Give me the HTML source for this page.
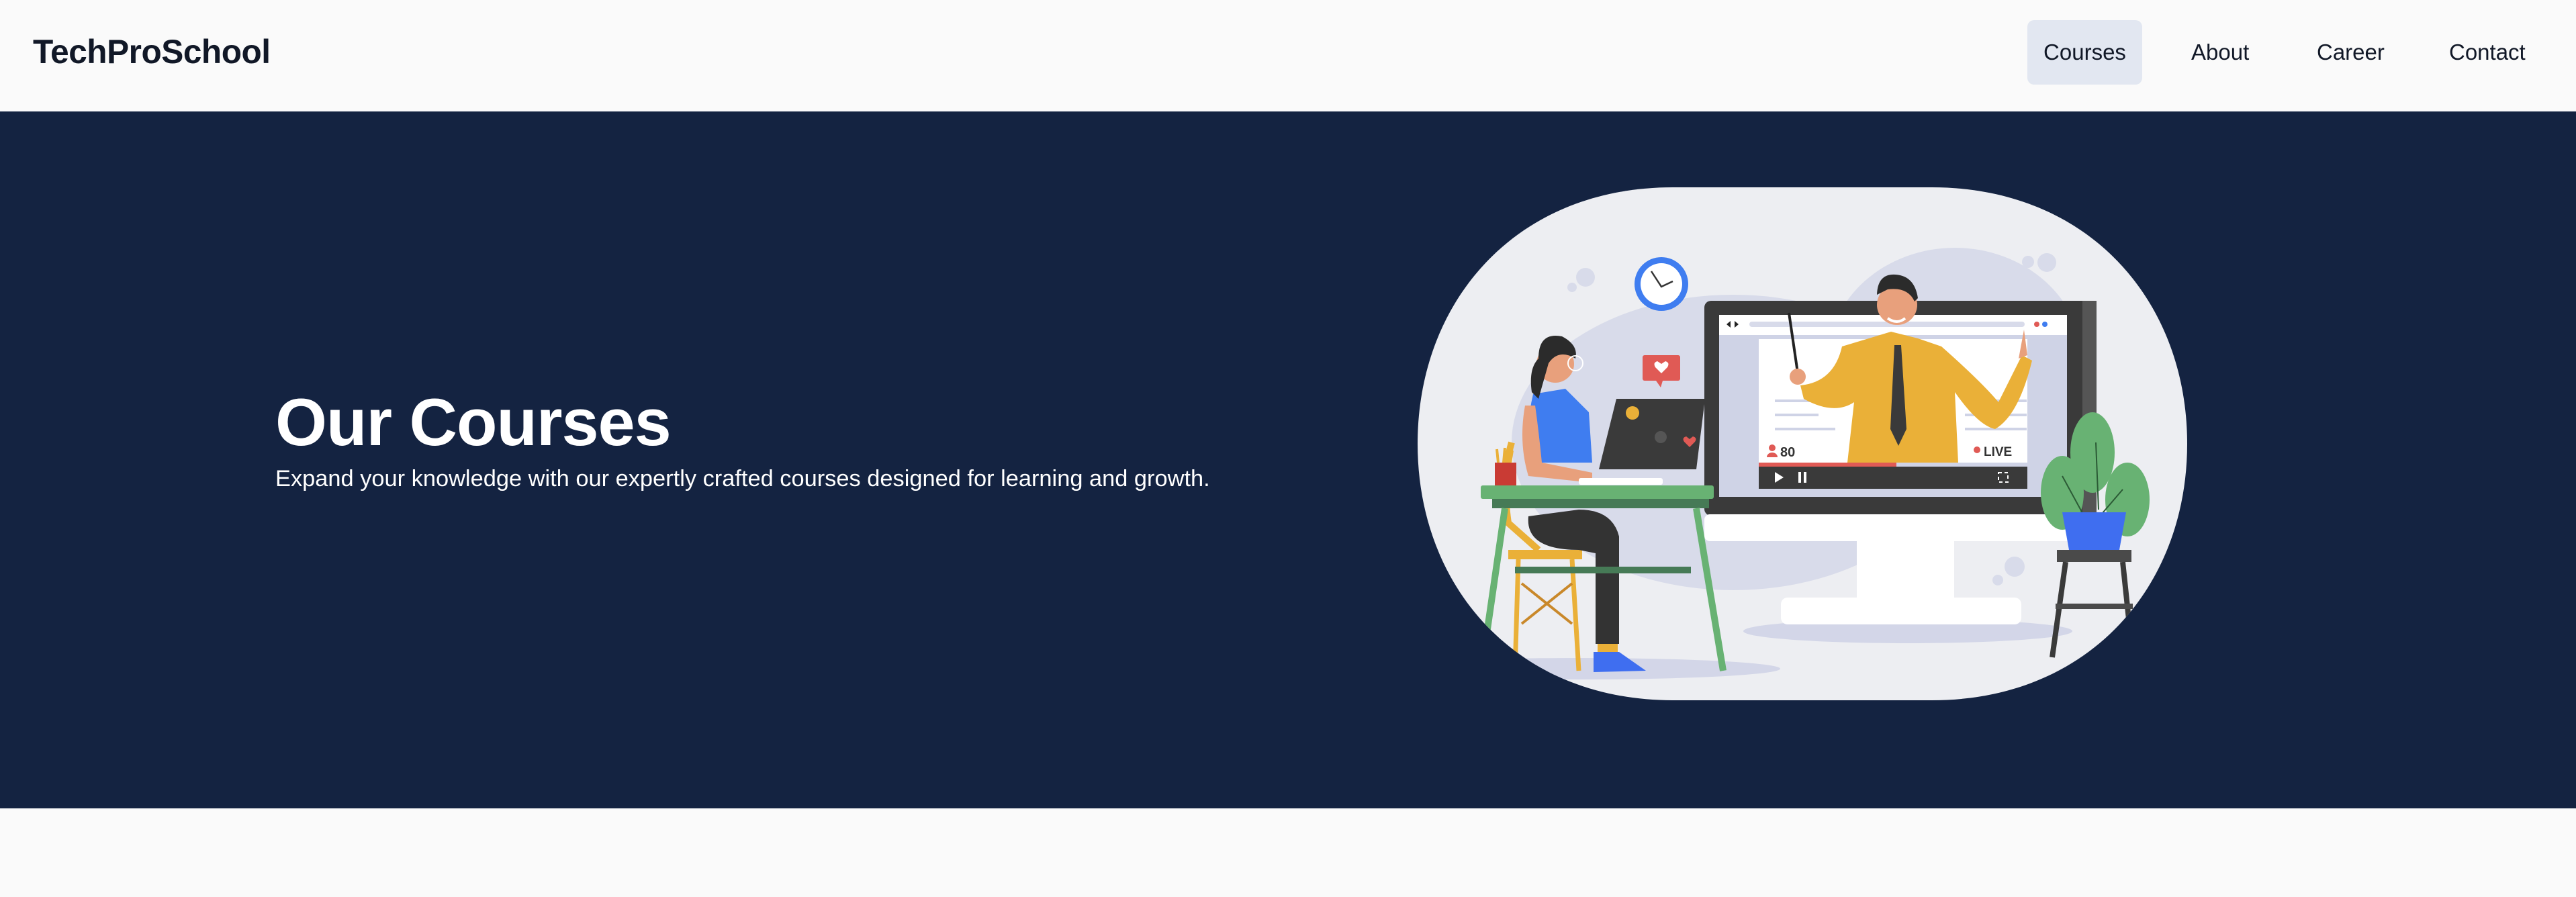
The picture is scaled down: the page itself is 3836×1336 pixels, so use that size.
<!DOCTYPE html>
<html><head><meta charset="utf-8"><style>
html,body{margin:0;padding:0;width:3836px;height:1336px;overflow:hidden;background:#fafafa;font-family:"Liberation Sans",Arial,sans-serif;}
.hdr{position:absolute;left:0;top:0;width:3836px;height:166px;background:#fafafa;}
.logo{position:absolute;left:49px;top:48px;font-size:49.6px;font-weight:bold;color:#111827;letter-spacing:-0.5px;}
.nav{position:absolute;top:30px;height:96px;line-height:96px;font-size:33px;color:#111827;}
.pill{background:#e2e7f1;border-radius:10px;}
.hero{position:absolute;left:0;top:166px;width:3836px;height:1038px;background:#142341;}
h1{position:absolute;left:410px;top:406px;margin:0;font-size:99px;font-weight:bold;color:#fff;letter-spacing:-1px;}
.sub{position:absolute;left:410px;top:528px;font-size:34.4px;color:#fff;white-space:nowrap;}
svg{position:absolute;left:2111px;top:279px;}
</style></head><body>
<div class="hdr">
<div class="logo">TechProSchool</div>
<div class="nav pill" style="left:3019px;width:171px;text-align:center;">Courses</div>
<div class="nav" style="left:3263px;">About</div>
<div class="nav" style="left:3450px;">Career</div>
<div class="nav" style="left:3647px;">Contact</div>
</div>
<div class="hero">
<h1>Our Courses</h1>
<div class="sub">Expand your knowledge with our expertly crafted courses designed for learning and growth.</div>
</div>
<svg width="1146" height="764" viewBox="0 0 1146 764">
<defs><clipPath id="c"><path d="M380 0 H766 C1000 0 1146 170 1146 382 C1146 594 1000 764 766 764 H380 C146 764 0 594 0 382 C0 170 146 0 380 0 Z"/></clipPath></defs>
<g clip-path="url(#c)">
<rect width="1146" height="764" fill="#edeef2"/>
<ellipse cx="470" cy="380" rx="330" ry="220" fill="#d8dbea"/>
<ellipse cx="800" cy="260" rx="190" ry="170" fill="#d8dbea"/>
<circle cx="250" cy="134" r="14" fill="#d8dbea"/><circle cx="230" cy="149" r="7" fill="#d8dbea"/>
<circle cx="909" cy="111" r="9" fill="#d8dbea"/><circle cx="937" cy="112" r="14" fill="#d8dbea"/>
<circle cx="889" cy="565" r="15" fill="#d8dbea"/><circle cx="864" cy="585" r="8" fill="#d8dbea"/>
<ellipse cx="730" cy="661" rx="245" ry="18" fill="#d3d6e8"/>
<ellipse cx="240" cy="717" rx="300" ry="16" fill="#d3d6e8"/>
<circle cx="363" cy="144" r="40" fill="#3f7df0"/><circle cx="363" cy="144" r="31" fill="#fff"/>
<path d="M348 125 L363 148 L380 140" stroke="#333" stroke-width="2.5" fill="none"/>
<rect x="427" y="169" width="584" height="320" rx="10" fill="#3a3a3a"/>
<rect x="990" y="169" width="21" height="320" fill="#555"/>
<rect x="449" y="190" width="518" height="271" fill="#cfd3e6"/>
<rect x="449" y="190" width="518" height="30" fill="#fff"/>
<rect x="494" y="200" width="410" height="8" rx="4" fill="#d8dbea"/>
<circle cx="922" cy="204" r="4" fill="#e05a55"/><circle cx="934" cy="204" r="4" fill="#3f7df0"/>
<path d="M466 199 l-6 5 6 5z M472 199 l6 5 -6 5z" fill="#222"/>
<rect x="427" y="487" width="567" height="40" rx="8" fill="#fff"/>
<rect x="654" y="527" width="145" height="84" fill="#fff"/>
<rect x="541" y="611" width="358" height="40" rx="10" fill="#fff"/>
<rect x="508" y="226" width="400" height="184" fill="#fff"/>
<rect x="532" y="316" width="65" height="4" fill="#cfd3e6"/><rect x="532" y="337" width="65" height="4" fill="#cfd3e6"/><rect x="532" y="358" width="90" height="4" fill="#cfd3e6"/>
<rect x="815" y="316" width="92" height="4" fill="#cfd3e6"/><rect x="815" y="337" width="92" height="4" fill="#cfd3e6"/><rect x="815" y="358" width="92" height="4" fill="#cfd3e6"/>
<rect x="508" y="410" width="205" height="6" fill="#e05a55"/><rect x="713" y="410" width="195" height="6" fill="#cfd3e6"/>
<rect x="508" y="416" width="400" height="33" fill="#3a3a3a"/>
<path d="M532 424 l13 8 -13 8z" fill="#fff"/><rect x="567" y="424" width="4" height="16" fill="#fff"/><rect x="575" y="424" width="4" height="16" fill="#fff"/>
<rect x="865" y="425" width="14" height="14" fill="none" stroke="#fff" stroke-width="2" stroke-dasharray="5 4"/>
<text x="540" y="401" font-family="Liberation Sans" font-weight="bold" font-size="20" fill="#333">80</text>
<circle cx="528" cy="388" r="5" fill="#e05a55"/><path d="M520 402 a8 7 0 0 1 16 0z" fill="#e05a55"/>
<circle cx="833" cy="391" r="5" fill="#e05a55"/>
<text x="843" y="400" font-family="Liberation Sans" font-weight="bold" font-size="19" fill="#333">LIVE</text>
<path d="M632 237 L705 215 L745 225 L780 237 Q840 290 865 320 L900 250 L915 258 Q895 340 860 360 Q835 355 800 305 L805 410 L640 410 L650 320 Q620 340 575 315 L570 295 Q620 290 632 237Z" fill="#eab038"/>
<path d="M710 235 L720 235 L728 360 L716 385 L704 360Z" fill="#3a3a3a"/>
<circle cx="714" cy="175" r="30" fill="#e8a07c"/>
<path d="M684 160 Q685 128 712 130 Q740 132 745 165 L740 170 Q730 148 700 152 Z" fill="#2b2b2b"/>
<path d="M700 195 Q714 205 726 195" stroke="#fff" stroke-width="4" fill="none"/>
<line x1="553" y1="187" x2="568" y2="290" stroke="#222" stroke-width="4"/>
<circle cx="566" cy="282" r="12" fill="#e8a07c"/>
<path d="M903 212 L908 250 L895 255Z" fill="#e8a07c"/>
<ellipse cx="1005" cy="395" rx="33" ry="60" fill="#68b273"/>
<ellipse cx="960" cy="455" rx="32" ry="55" fill="#68b273"/>
<ellipse cx="1057" cy="465" rx="33" ry="55" fill="#68b273"/>
<path d="M1010 380 L1014 480 M960 430 L990 485 M1050 450 L1020 485" stroke="#2b5a35" stroke-width="2" fill="none"/>
<path d="M960 484 L1055 484 L1045 540 L970 540Z" fill="#3f6ef0"/>
<rect x="952" y="540" width="111" height="18" fill="#4a4a4a"/>
<path d="M965 558 L945 700 M1050 558 L1065 700" stroke="#3a3a3a" stroke-width="8"/>
<rect x="950" y="620" width="115" height="8" fill="#4a4a4a"/>
<path d="M140 380 Q125 430 135 500 L180 540" stroke="#eab038" stroke-width="10" fill="none"/>
<rect x="135" y="540" width="110" height="14" fill="#eab038"/>
<path d="M150 554 L145 720 M230 554 L240 720" stroke="#eab038" stroke-width="7"/>
<path d="M155 590 L230 650 M230 590 L155 650" stroke="#c9882a" stroke-width="4"/>
<path d="M165 490 Q160 540 240 540 L265 545 L265 680 L300 680 L300 520 Q290 480 240 480Z" fill="#333"/>
<rect x="268" y="680" width="30" height="12" fill="#eab038"/>
<path d="M262 692 L300 692 L340 720 L262 722Z" fill="#3f6ef0"/>
<path d="M172 308 L220 300 L255 335 L260 410 L165 410 Q160 360 172 308Z" fill="#3f7df0"/>
<path d="M160 325 Q150 380 165 430 L260 440 L260 425 L185 410 Q180 360 175 325Z" fill="#e8a07c"/>
<circle cx="205" cy="263" r="28" fill="#e8a07c"/>
<path d="M180 255 Q180 215 215 222 Q240 235 235 255 Q210 240 195 262 L180 315 L170 305 Q165 270 180 255Z" fill="#2b2b2b"/>
<circle cx="235" cy="262" r="11" fill="none" stroke="#fff" stroke-width="2"/>
<path d="M296 315 L428 315 L415 420 L270 420Z" fill="#3a3a3a"/>
<circle cx="320" cy="336" r="10" fill="#eab038"/>
<circle cx="362" cy="372" r="9" fill="#555"/>
<path d="M405 387 l-8 -8 q-4 -6 3 -8 l5 4 5 -4 q7 2 3 8z" fill="#e05a55"/>
<rect x="240" y="433" width="125" height="10" rx="3" fill="#fff"/>
<rect x="335" y="250" width="56" height="38" rx="3" fill="#e05a55"/>
<path d="M355 288 l10 0 -3 10z" fill="#e05a55"/>
<path d="M363 277 l-9 -9 q-4 -7 3 -9 l6 4 6 -4 q7 2 3 9z" fill="#fff"/>
<rect x="115" y="410" width="32" height="36" fill="#c93b34"/>
<path d="M120 410 L118 390 M128 410 L130 388 M138 410 L141 392" stroke="#eab038" stroke-width="4"/>
<rect x="94" y="444" width="347" height="20" rx="3" fill="#68b273"/>
<rect x="111" y="464" width="323" height="14" fill="#467a56"/>
<path d="M130 478 L95 720 M415 478 L455 720" stroke="#68b273" stroke-width="10"/>
<rect x="145" y="565" width="262" height="10" fill="#467a56"/>
</g>
</svg>
</body></html>
